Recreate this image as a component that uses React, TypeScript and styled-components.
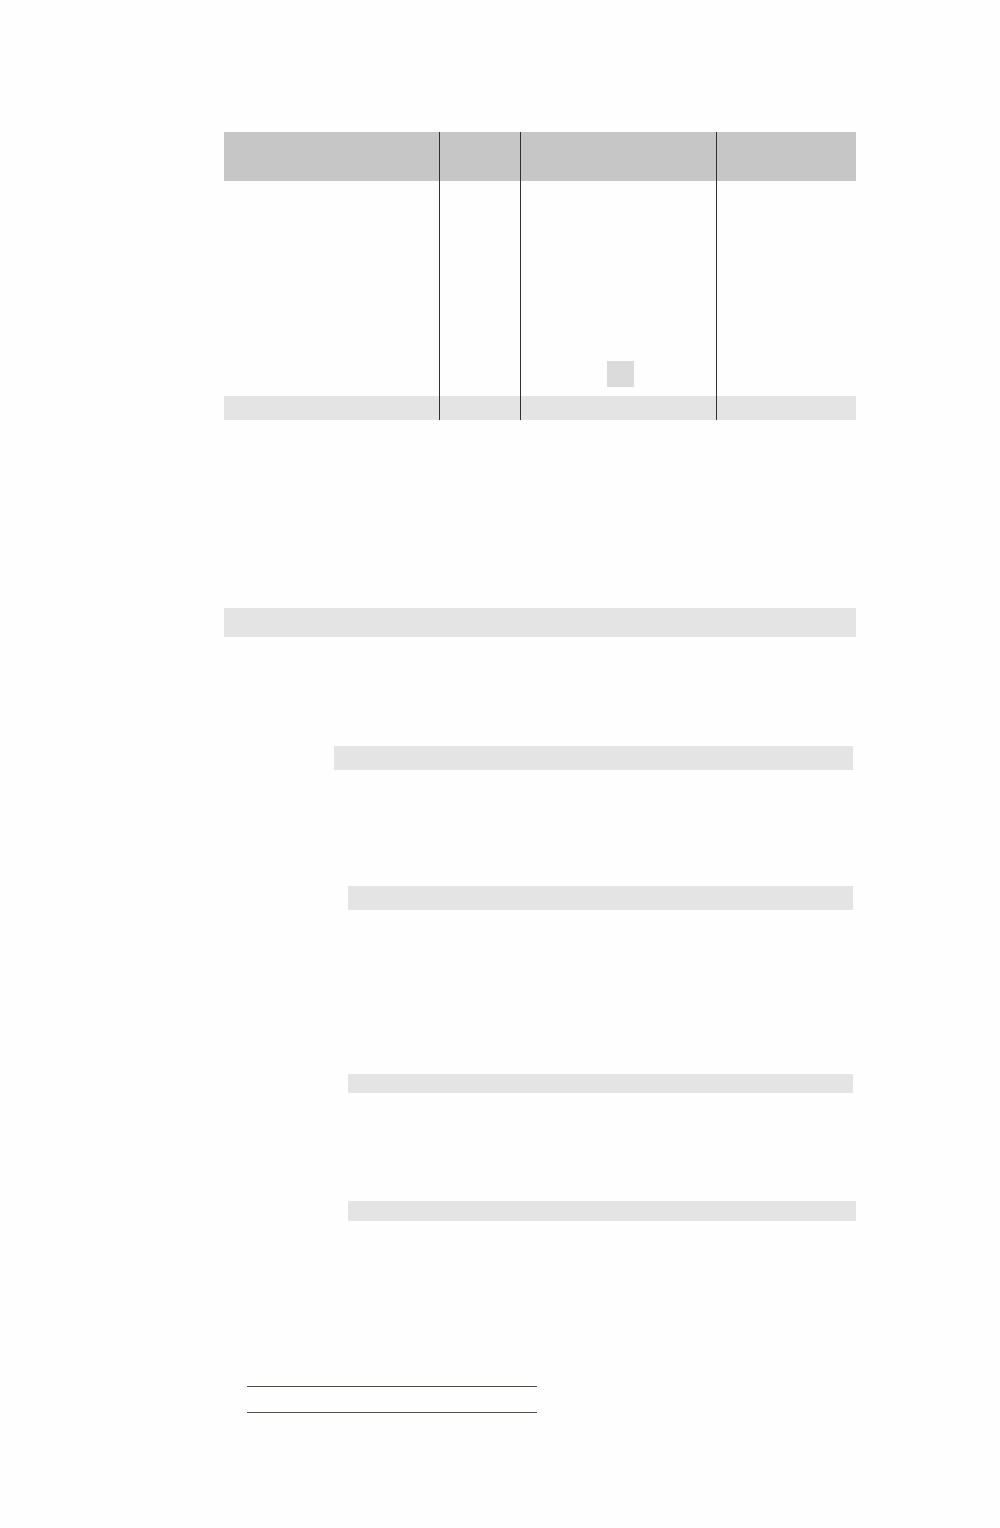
import styled, { createGlobalStyle } from "styled-components";

const Global = createGlobalStyle`
  html, body {
    margin: 0;
    padding: 0;
    background: #fefefe;
    font-family: "Liberation Sans", Arial, sans-serif;
  }
`;

const Page = styled.main`
  width: 632px;
  margin-left: 224px;
  padding-top: 132px;
  padding-bottom: 100px;
`;

const Table = styled.div`
  display: grid;
  grid-template-columns: 215px 81px 196px 140px;
  grid-template-rows: 49px 215px 24px;
`;

const Cell = styled.div<{ $kind: "head" | "body" | "foot"; $first?: boolean }>`
  box-sizing: border-box;
  border-left: ${(p) => (p.$first ? "none" : "1px solid #2f2f2f")};
  background: ${(p) =>
    p.$kind === "head" ? "#c6c6c6" : p.$kind === "foot" ? "#e4e4e4" : "transparent"};
  position: relative;
  display: flex;
  align-items: flex-end;
`;

const Swatch = styled.div`
  width: 27px;
  height: 26px;
  margin: 0 0 9px 86px;
  background: #dbdbdb;
`;

const Bar = styled.div<{ $top: number; $height: number; $indent?: number; $right?: number }>`
  margin-top: ${(p) => p.$top}px;
  margin-left: ${(p) => p.$indent ?? 0}px;
  margin-right: ${(p) => p.$right ?? 0}px;
  height: ${(p) => p.$height}px;
  background: #e4e4e4;
`;

const Signatures = styled.div`
  margin-top: 165px;
  margin-left: 23px;
  width: 290px;
  display: flex;
  flex-direction: column;
  gap: 25px;
`;

const SignLine = styled.div`
  height: 1px;
  background: #4f4b44;
`;

const columns = [0, 1, 2, 3];

const bars = [
  { top: 188, height: 29 },
  { top: 109, height: 24, indent: 110, right: 3 },
  { top: 116, height: 24, indent: 124, right: 3 },
  { top: 164, height: 19, indent: 124, right: 3 },
  { top: 108, height: 20, indent: 124 },
];

export default function App() {
  return (
    <>
      <Global />
      <Page>
        <Table>
          {columns.map((c) => (
            <Cell key={`h${c}`} $kind="head" $first={c === 0} />
          ))}
          {columns.map((c) => (
            <Cell key={`b${c}`} $kind="body" $first={c === 0}>
              {c === 2 && <Swatch />}
            </Cell>
          ))}
          {columns.map((c) => (
            <Cell key={`f${c}`} $kind="foot" $first={c === 0} />
          ))}
        </Table>
        {bars.map((b, i) => (
          <Bar key={i} $top={b.top} $height={b.height} $indent={b.indent} $right={b.right} />
        ))}
        <Signatures>
          <SignLine />
          <SignLine />
        </Signatures>
      </Page>
    </>
  );
}
